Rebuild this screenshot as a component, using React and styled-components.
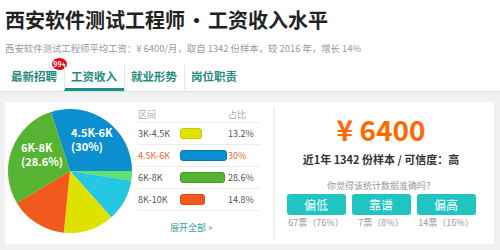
import React from "react";
import styled, { createGlobalStyle } from "styled-components";

const GlobalStyle = createGlobalStyle`
  html, body {
    margin: 0;
    padding: 0;
    background: #f1f1f1;
  }
  body {
    width: 500px;
    height: 250px;
    overflow: hidden;
    font-family: "Noto Sans CJK SC", "Noto Sans", sans-serif;
  }
`;

const Header = styled.div`
  background: #fff;
  padding: 8px 5px 0;
  border-bottom: 1px solid #dcdcdc;
`;

const Title = styled.h1`
  margin: 0;
  font-size: 20px;
  line-height: 24px;
  font-weight: 700;
  color: #222;
  word-spacing: -3px;
`;

const Subtitle = styled.p`
  margin: 9px 0 0;
  font-size: 9.4px;
  line-height: 14px;
  color: #9a9a9a;
`;

const Tabs = styled.div`
  display: flex;
  margin: 8px 0 0 -1px;
  height: 28px;
`;

const Tab = styled.div`
  position: relative;
  width: 60px;
  display: flex;
  align-items: center;
  justify-content: center;
  font-size: 11.5px;
  font-weight: 700;
  color: #1f8c7e;
  box-sizing: border-box;
  border-bottom: 3px solid ${p => (p.$active ? "#12928a" : "transparent")};
  &:not(:first-child)::before {
    content: "";
    position: absolute;
    left: 0;
    top: 1px;
    bottom: -2px;
    width: 1px;
    background: #e6e6e6;
  }
`;

const Badge = styled.span`
  position: absolute;
  top: -5px;
  right: -3px;
  width: 15px;
  height: 12px;
  border-radius: 50%;
  background: #e60012;
  color: #fff;
  font-size: 7px;
  line-height: 12px;
  font-weight: 700;
  text-align: center;
`;

const Card = styled.div`
  display: flex;
  margin: 10px 6px 0 5px;
  height: 142px;
  background: #fff;
`;

const PieBox = styled.div`
  width: 133px;
  flex: none;
`;

const Legend = styled.div`
  width: 122px;
  flex: none;
  padding-top: 5px;
  font-size: 9px;
`;

const LegendRow = styled.div`
  display: grid;
  grid-template-columns: 42px 48px 1fr;
  align-items: center;
  height: ${p => (p.$head ? "15px" : "21px")};
  border-bottom: 1px solid #ececec;
  color: ${p => (p.$head ? "#a8a8a8" : p.$hot ? "#f06a2c" : "#555")};
`;

const Bar = styled.span`
  display: block;
  height: 9px;
  border-radius: 3px;
  background: ${p => p.$color};
  border: 1px solid ${p => p.$border};
`;

const More = styled.div`
  margin-top: 10px;
  padding-left: 32px;
  line-height: 14px;
  color: #38a39c;
`;

const Divider = styled.div`
  width: 2px;
  margin: 6px 0 5px 13px;
  background: #efefef;
`;

const Stats = styled.div`
  flex: 1;
  margin-right: 7px;
  padding-top: 11px;
  display: flex;
  flex-direction: column;
  align-items: center;
`;

const Price = styled.div`
  font-size: 28px;
  line-height: 32px;
  font-weight: 700;
  color: #ff6a00;
`;

const Sample = styled.div`
  margin-top: 6px;
  font-size: 11px;
  line-height: 16px;
  font-weight: 700;
  color: #333;
`;

const Question = styled.div`
  margin-top: 13px;
  font-size: 9px;
  line-height: 12px;
  color: #999;
`;

const Votes = styled.div`
  margin-top: 2px;
  display: grid;
  grid-template-columns: repeat(3, 59px);
  column-gap: 6px;
`;

const VoteButton = styled.button`
  height: 21px;
  padding: 0;
  border: none;
  border-radius: 3px;
  background: #20c5c2;
  color: #fff;
  font-family: inherit;
  font-size: 12px;
`;

const VoteCount = styled.div`
  margin-top: 2px;
  text-align: center;
  font-size: 9px;
  line-height: 12px;
  color: #999;
`;

const slices = [
  { value: 30, color: "#0b8fce" },
  { value: 2.5, color: "#62e06e" },
  { value: 10.9, color: "#24c8e2" },
  { value: 13.2, color: "#dfe100" },
  { value: 14.8, color: "#f2591d" },
  { value: 28.6, color: "#56b432" }
];

const rows = [
  { range: "3K-4.5K", pct: "13.2%", width: 20, color: "#dfe100", border: "#c8ca00" },
  { range: "4.5K-6K", pct: "30%", width: 45, color: "#0b8fce", border: "#0878b2", hot: true },
  { range: "6K-8K", pct: "28.6%", width: 43, color: "#56b432", border: "#3f9a22" },
  { range: "8K-10K", pct: "14.8%", width: 23, color: "#f2591d", border: "#d8470f" }
];

const votes = [
  { label: "偏低", count: "67票（76%）" },
  { label: "靠谱", count: "7票（8%）" },
  { label: "偏高", count: "14票（16%）" }
];

const cx = 65;
const cy = 69;
const r = 62;

const point = deg => {
  const a = ((deg - 90) * Math.PI) / 180;
  return [cx + r * Math.cos(a), cy + r * Math.sin(a)];
};

const Pie = () => {
  let start = -18;
  return (
    <svg width="133" height="142" viewBox="0 0 133 142">
      {slices.map((s, i) => {
        const end = start + (s.value / 100) * 360;
        const [x1, y1] = point(start);
        const [x2, y2] = point(end);
        const large = end - start > 180 ? 1 : 0;
        const d = `M${cx} ${cy} L${x1} ${y1} A${r} ${r} 0 ${large} 1 ${x2} ${y2} Z`;
        start = end;
        return <path key={i} d={d} fill={s.color} />;
      })}
      <g fill="#fff" fontSize="11" fontWeight="700" fontFamily='"Noto Sans CJK SC", sans-serif'>
        <text x="66" y="35">4.5K-6K</text>
        <text x="66" y="49">(30%)</text>
        <text x="16" y="50">6K-8K</text>
        <text x="16" y="64">(28.6%)</text>
      </g>
    </svg>
  );
};

const App = () => {
  return (
    <>
      <GlobalStyle />
      <Header>
        <Title>西安软件测试工程师 • 工资收入水平</Title>
        <Subtitle>
          西安软件测试工程师平均工资：¥ 6400/月，取自 1342 份样本，较 2016 年，增长 14%
        </Subtitle>
        <Tabs>
          <Tab>
            最新招聘
            <Badge>99+</Badge>
          </Tab>
          <Tab $active>工资收入</Tab>
          <Tab>就业形势</Tab>
          <Tab>岗位职责</Tab>
        </Tabs>
      </Header>
      <Card>
        <PieBox>
          <Pie />
        </PieBox>
        <Legend>
          <LegendRow $head>
            <span>区间</span>
            <span />
            <span>占比</span>
          </LegendRow>
          {rows.map(row => (
            <LegendRow key={row.range} $hot={row.hot}>
              <span>{row.range}</span>
              <span>
                <Bar
                  $color={row.color}
                  $border={row.border}
                  style={{ width: row.width }}
                />
              </span>
              <span>{row.pct}</span>
            </LegendRow>
          ))}
          <More>展开全部 »</More>
        </Legend>
        <Divider />
        <Stats>
          <Price>¥ 6400</Price>
          <Sample>近1年 1342 份样本 / 可信度：高</Sample>
          <Question>你觉得该统计数据准确吗？</Question>
          <Votes>
            {votes.map(v => (
              <VoteButton key={v.label}>{v.label}</VoteButton>
            ))}
            {votes.map(v => (
              <VoteCount key={v.count}>{v.count}</VoteCount>
            ))}
          </Votes>
        </Stats>
      </Card>
    </>
  );
};

export default App;
